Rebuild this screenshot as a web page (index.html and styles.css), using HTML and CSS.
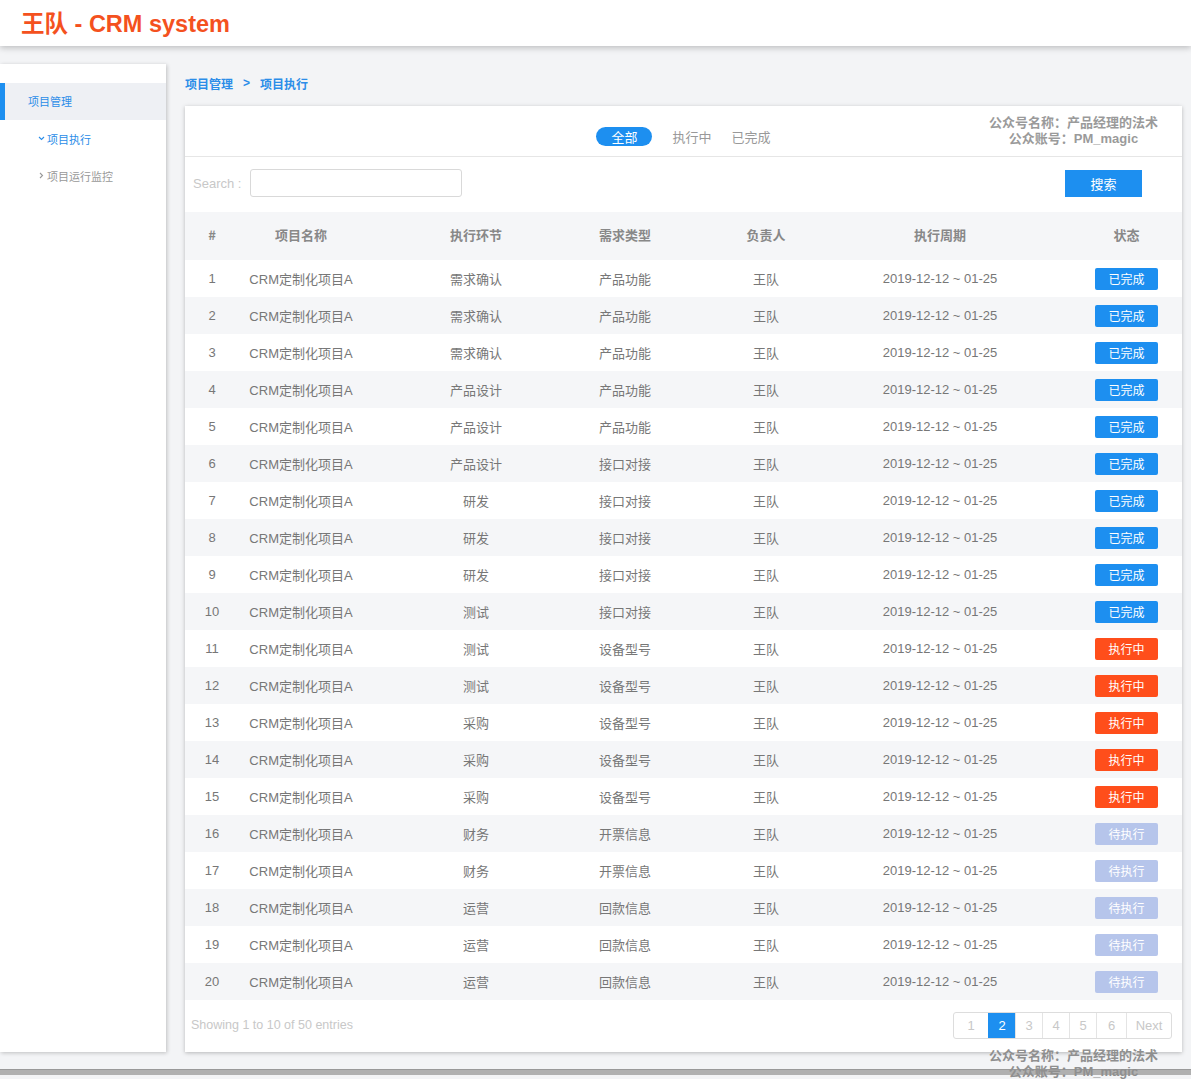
FILE: index.html
```html
<!DOCTYPE html>
<html lang="zh-CN">
<head>
<meta charset="utf-8">
<title>王队 - CRM system</title>
<link rel="stylesheet" href="styles.css">
</head>
<body>
<header class="topbar">
  <h1 class="brand">王队 - CRM system</h1>
</header>

<div class="layout">
  <aside class="sidebar">
    <div class="menu-item active">项目管理</div>
    <div class="sub-item current">
      <svg class="chev" width="7" height="7" viewBox="0 0 7 7"><path d="M1 2 L3.5 4.5 L6 2" fill="none" stroke="currentColor" stroke-width="1.1"/></svg>
      项目执行
    </div>
    <div class="sub-item">
      <svg class="chev" width="7" height="7" viewBox="0 0 7 7"><path d="M2 1 L4.5 3.5 L2 6" fill="none" stroke="currentColor" stroke-width="1.1"/></svg>
      项目运行监控
    </div>
  </aside>

  <main class="main">
    <nav class="crumbs">
      <span>项目管理</span>
      <span class="sep">&gt;</span>
      <span>项目执行</span>
    </nav>

    <section class="card">
      <div class="tabs-row">
        <div class="tabs">
          <span class="tab on">全部</span>
          <span class="tab">执行中</span>
          <span class="tab">已完成</span>
        </div>
        <div class="mark mark-top"><div>公众号名称：产品经理的法术</div><div>公众账号：PM_magic</div></div>
      </div>

      <div class="search-row">
        <label class="search-label">Search :</label>
        <input class="search-input" type="text">
        <button class="btn">搜索</button>
      </div>

      <table class="grid">
        <colgroup>
          <col class="c1"><col class="c2"><col class="c3"><col class="c4"><col class="c5"><col class="c6"><col class="c7">
        </colgroup>
        <thead>
          <tr><th>#</th><th>项目名称</th><th>执行环节</th><th>需求类型</th><th>负责人</th><th>执行周期</th><th class="st">状态</th></tr>
        </thead>
        <tbody>
          <tr><td>1</td><td>CRM定制化项目A</td><td>需求确认</td><td>产品功能</td><td>王队</td><td>2019-12-12 ~ 01-25</td><td class="st"><span class="badge done">已完成</span></td></tr>
          <tr><td>2</td><td>CRM定制化项目A</td><td>需求确认</td><td>产品功能</td><td>王队</td><td>2019-12-12 ~ 01-25</td><td class="st"><span class="badge done">已完成</span></td></tr>
          <tr><td>3</td><td>CRM定制化项目A</td><td>需求确认</td><td>产品功能</td><td>王队</td><td>2019-12-12 ~ 01-25</td><td class="st"><span class="badge done">已完成</span></td></tr>
          <tr><td>4</td><td>CRM定制化项目A</td><td>产品设计</td><td>产品功能</td><td>王队</td><td>2019-12-12 ~ 01-25</td><td class="st"><span class="badge done">已完成</span></td></tr>
          <tr><td>5</td><td>CRM定制化项目A</td><td>产品设计</td><td>产品功能</td><td>王队</td><td>2019-12-12 ~ 01-25</td><td class="st"><span class="badge done">已完成</span></td></tr>
          <tr><td>6</td><td>CRM定制化项目A</td><td>产品设计</td><td>接口对接</td><td>王队</td><td>2019-12-12 ~ 01-25</td><td class="st"><span class="badge done">已完成</span></td></tr>
          <tr><td>7</td><td>CRM定制化项目A</td><td>研发</td><td>接口对接</td><td>王队</td><td>2019-12-12 ~ 01-25</td><td class="st"><span class="badge done">已完成</span></td></tr>
          <tr><td>8</td><td>CRM定制化项目A</td><td>研发</td><td>接口对接</td><td>王队</td><td>2019-12-12 ~ 01-25</td><td class="st"><span class="badge done">已完成</span></td></tr>
          <tr><td>9</td><td>CRM定制化项目A</td><td>研发</td><td>接口对接</td><td>王队</td><td>2019-12-12 ~ 01-25</td><td class="st"><span class="badge done">已完成</span></td></tr>
          <tr><td>10</td><td>CRM定制化项目A</td><td>测试</td><td>接口对接</td><td>王队</td><td>2019-12-12 ~ 01-25</td><td class="st"><span class="badge done">已完成</span></td></tr>
          <tr><td>11</td><td>CRM定制化项目A</td><td>测试</td><td>设备型号</td><td>王队</td><td>2019-12-12 ~ 01-25</td><td class="st"><span class="badge run">执行中</span></td></tr>
          <tr><td>12</td><td>CRM定制化项目A</td><td>测试</td><td>设备型号</td><td>王队</td><td>2019-12-12 ~ 01-25</td><td class="st"><span class="badge run">执行中</span></td></tr>
          <tr><td>13</td><td>CRM定制化项目A</td><td>采购</td><td>设备型号</td><td>王队</td><td>2019-12-12 ~ 01-25</td><td class="st"><span class="badge run">执行中</span></td></tr>
          <tr><td>14</td><td>CRM定制化项目A</td><td>采购</td><td>设备型号</td><td>王队</td><td>2019-12-12 ~ 01-25</td><td class="st"><span class="badge run">执行中</span></td></tr>
          <tr><td>15</td><td>CRM定制化项目A</td><td>采购</td><td>设备型号</td><td>王队</td><td>2019-12-12 ~ 01-25</td><td class="st"><span class="badge run">执行中</span></td></tr>
          <tr><td>16</td><td>CRM定制化项目A</td><td>财务</td><td>开票信息</td><td>王队</td><td>2019-12-12 ~ 01-25</td><td class="st"><span class="badge wait">待执行</span></td></tr>
          <tr><td>17</td><td>CRM定制化项目A</td><td>财务</td><td>开票信息</td><td>王队</td><td>2019-12-12 ~ 01-25</td><td class="st"><span class="badge wait">待执行</span></td></tr>
          <tr><td>18</td><td>CRM定制化项目A</td><td>运营</td><td>回款信息</td><td>王队</td><td>2019-12-12 ~ 01-25</td><td class="st"><span class="badge wait">待执行</span></td></tr>
          <tr><td>19</td><td>CRM定制化项目A</td><td>运营</td><td>回款信息</td><td>王队</td><td>2019-12-12 ~ 01-25</td><td class="st"><span class="badge wait">待执行</span></td></tr>
          <tr><td>20</td><td>CRM定制化项目A</td><td>运营</td><td>回款信息</td><td>王队</td><td>2019-12-12 ~ 01-25</td><td class="st"><span class="badge wait">待执行</span></td></tr>
        </tbody>
      </table>

      <div class="card-foot">
        <span class="info">Showing 1 to 10 of 50 entries</span>
        <div class="pager">
          <span class="pg p1">1</span>
          <span class="pg on">2</span>
          <span class="pg">3</span>
          <span class="pg">4</span>
          <span class="pg">5</span>
          <span class="pg p6">6</span>
          <span class="pg next">Next</span>
        </div>
      </div>
    </section>
  </main>
</div>

<div class="bottom-band"></div>
<div class="mark mark-bottom"><div>公众号名称：产品经理的法术</div><div>公众账号：PM_magic</div></div>
</body>
</html>
```

FILE: styles.css
```css
* { box-sizing: border-box; }

html, body {
  margin: 0;
  padding: 0;
  height: 1079px;
  overflow: hidden;
}

body {
  background: #f3f4f6;
  font-family: "Liberation Sans", "Noto Sans CJK SC", sans-serif;
  color: #777;
  position: relative;
}

.topbar {
  height: 46px;
  background: #fff;
  box-shadow: 0 2px 6px rgba(0, 0, 0, 0.22);
  position: relative;
  z-index: 2;
  display: flex;
  align-items: center;
  padding-left: 21px;
  padding-top: 3px;
}

.brand {
  margin: 0;
  font-size: 23.5px;
  font-weight: bold;
  color: #f4511e;
  line-height: 1;
}

.layout {
  display: flex;
  padding-top: 18px;
  height: 1006px;
}

.sidebar {
  width: 166px;
  flex: none;
  background: #fff;
  box-shadow: 1px 1px 4px rgba(0, 0, 0, 0.22);
  padding-top: 19px;
  font-family: "Noto Sans CJK SC", sans-serif;
  font-size: 11px;
}

.menu-item {
  height: 37px;
  line-height: 37px;
  padding-left: 28px;
  color: #2b8de8;
}

.menu-item.active {
  background: #eef0f4;
  border-left: 5px solid #1d8ff0;
  padding-left: 23px;
}

.sub-item {
  height: 37px;
  display: flex;
  align-items: center;
  padding-left: 38px;
  color: #999;
  gap: 2px;
}

.sub-item.current {
  color: #2b8de8;
}

.chev {
  flex: none;
}

.main {
  flex: 1;
  padding: 0 9px 0 19px;
  min-width: 0;
}

.crumbs {
  height: 42px;
  display: flex;
  align-items: center;
  gap: 10px;
  padding-bottom: 4px;
  font-family: "Noto Sans CJK SC", sans-serif;
  font-size: 12px;
  font-weight: bold;
  color: #2b8de8;
}

.crumbs .sep {
  font-family: "Liberation Sans", sans-serif;
  font-size: 12px;
}

.card {
  background: #fff;
  box-shadow: 0 1px 4px rgba(0, 0, 0, 0.25);
  height: 946px;
  display: flex;
  flex-direction: column;
}

.tabs-row {
  height: 51px;
  border-bottom: 1px solid #e6e6e6;
  display: flex;
  justify-content: center;
  align-items: center;
  padding-top: 10px;
  position: relative;
  flex: none;
}

.tabs {
  display: flex;
  align-items: center;
  gap: 20px;
  font-family: "Noto Sans CJK SC", sans-serif;
  font-size: 13px;
  color: #999;
}

.tab.on {
  background: #1d8ff0;
  color: #fff;
  border-radius: 10px;
  height: 19px;
  line-height: 19px;
  padding: 0 15px;
}

.mark {
  font-family: "Liberation Sans", "Noto Sans CJK SC", sans-serif;
  font-size: 13px;
  font-weight: bold;
  color: #9a9a9a;
  line-height: 16px;
  text-align: center;
  white-space: nowrap;
}

.mark-top {
  position: absolute;
  right: 24px;
  top: 9px;
}

.search-row {
  height: 55px;
  display: flex;
  align-items: center;
  padding: 0 40px 3px 8px;
  flex: none;
}

.search-label {
  font-size: 13px;
  color: #c8c8c8;
  margin-right: 9px;
}

.search-input {
  width: 212px;
  height: 28px;
  border: 1px solid #d9d9d9;
  border-radius: 3px;
  background: #fff;
  margin: 0;
}

.btn {
  margin-left: auto;
  width: 77px;
  height: 27px;
  border: none;
  background: #1d8ff0;
  color: #fff;
  font-family: "Noto Sans CJK SC", sans-serif;
  font-size: 13px;
  padding: 0;
}

.grid {
  width: 100%;
  table-layout: fixed;
  border-collapse: collapse;
  flex: none;
}

.c1 { width: 54px; }
.c2 { width: 124px; }
.c3 { width: 226px; }
.c4 { width: 72px; }
.c5 { width: 210px; }
.c6 { width: 138px; }
.c7 { width: 173px; }

.grid th,
.grid td {
  text-align: center;
  padding: 0;
  white-space: nowrap;
  overflow: visible;
}

.grid thead tr {
  height: 48px;
  background: #f5f6f8;
}

.grid th {
  font-family: "Noto Sans CJK SC", sans-serif;
  font-size: 13px;
  font-weight: bold;
  color: #888;
  padding-bottom: 4px;
}

.grid tbody tr {
  height: 37px;
}

.grid tbody tr:nth-child(even) {
  background: #f5f6f8;
}

.grid td {
  font-family: "Liberation Sans", "Noto Sans CJK SC", sans-serif;
  font-size: 13px;
  color: #777;
}

.grid .st {
  padding-left: 62px;
}

.badge {
  display: inline-block;
  width: 63px;
  height: 22px;
  line-height: 22px;
  border-radius: 2px;
  color: #fff;
  font-family: "Noto Sans CJK SC", sans-serif;
  font-size: 12px;
  vertical-align: middle;
}

.badge.done { background: #1d8ff0; }
.badge.run { background: #ff4e1b; }
.badge.wait { background: #b6c5eb; }

.card-foot {
  flex: 1;
  display: flex;
  align-items: center;
  justify-content: space-between;
  padding: 0 10px 2px 6px;
}

.info {
  font-size: 12.5px;
  color: #c8c8c8;
}

.pager {
  display: flex;
  height: 27px;
  border: 1px solid #ddd;
  border-radius: 3px;
  overflow: hidden;
}

.pg {
  display: flex;
  align-items: center;
  justify-content: center;
  width: 27px;
  font-size: 13px;
  color: #c8c8c8;
  border-left: 1px solid #e4e4e4;
}

.pg.p1 { width: 34px; border-left: none; }
.pg.p6 { width: 30px; }
.pg.next { width: 45px; }

.pg.on {
  background: #1d8ff0;
  color: #fff;
  border-left-color: #1d8ff0;
}

.bottom-band {
  margin-top: 17px;
  height: 6px;
  background: #b0b0b0;
  border-top: 1px solid #999;
}

.mark-bottom {
  position: absolute;
  right: 33px;
  top: 1048px;
  color: #8f8f8f;
}
```
